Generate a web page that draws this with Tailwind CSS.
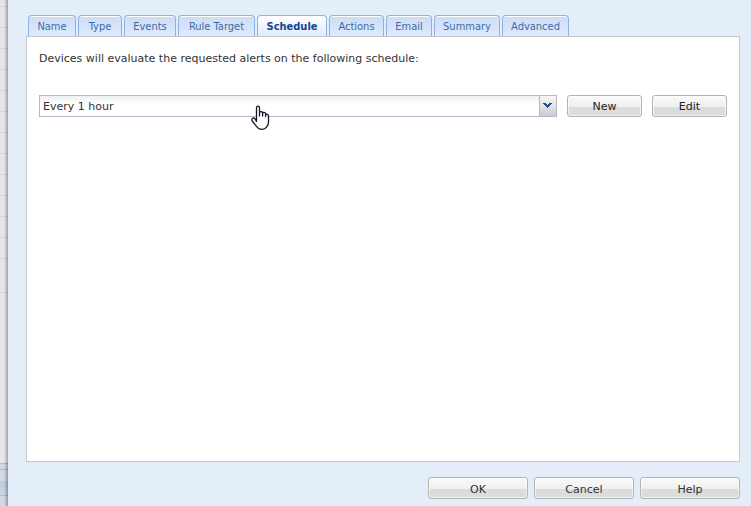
<!DOCTYPE html>
<html lang="en">
<head>
    <meta charset="UTF-8">
    <meta name="viewport" content="width=device-width, initial-scale=1.0">
    <title>Alert Rule - Schedule</title>
    <script src="https://cdn.jsdelivr.net/npm/@tailwindcss/browser@4"></script>
</head>
<body class="flex h-screen overflow-hidden bg-[#e4eef8] font-['DejaVu_Sans',sans-serif] text-[11px] leading-4 text-[#333]">
    <!-- Edge of the page behind the dialog -->
    <aside class="relative flex w-2 shrink-0 flex-col bg-[#e6e6e6]" aria-hidden="true">
        <div class="h-[7px] border-b border-[#d6d6d6]"></div>
        <div class="h-[21px] border-b border-[#d6d6d6]"></div>
        <div class="h-[21px] border-b border-[#d6d6d6]"></div>
        <div class="h-[21px] border-b border-[#d6d6d6]"></div>
        <div class="h-[21px] border-b border-[#d6d6d6]"></div>
        <div class="h-[21px] border-b border-[#d6d6d6]"></div>
        <div class="h-[21px] border-b border-[#d6d6d6]"></div>
        <div class="h-[21px] border-b border-[#d6d6d6]"></div>
        <div class="h-[21px] border-b border-[#d6d6d6]"></div>
        <div class="h-[21px] border-b border-[#d6d6d6]"></div>
        <div class="h-[21px] border-b border-[#d6d6d6]"></div>
        <div class="h-[21px] border-b border-[#d6d6d6]"></div>
        <div class="h-[21px] border-b border-[#d6d6d6]"></div>
        <div class="h-[34px] border-b border-[#d6d6d6]"></div>
        <div class="flex-1"></div>
        <div class="h-[7px] border-y border-[#b0bccd] bg-[#d3d9e1]"></div>
        <div class="h-[11px] bg-[#d3dae4]"></div>
        <div class="h-[15px] border-b border-[#b0bccd] bg-linear-to-b from-[#bccadc] to-[#cbd7e6]"></div>
        <div class="h-[10px] bg-[#d6dade]"></div>
        <div class="absolute inset-y-0 right-0 w-1 bg-linear-to-r from-black/0 to-black/30"></div>
    </aside>

    <main class="flex min-w-0 flex-1 flex-col pt-[15px] pr-[11px] pb-[7px] pl-[18px]">
        <nav class="flex h-[21px] shrink-0 gap-[2px] pl-[2px] font-['DejaVu_Sans_Condensed','DejaVu_Sans',sans-serif] text-[#416aa3]" role="tablist">
            <button role="tab" class="w-12 rounded-t border border-b-0 border-[#8db2e3] bg-linear-to-b from-[#cbdcf5] to-[#deebff] pt-[2px] inset-shadow-[0_1px_0_#fff]">Name</button>
            <button role="tab" class="w-11 rounded-t border border-b-0 border-[#8db2e3] bg-linear-to-b from-[#cbdcf5] to-[#deebff] pt-[2px] inset-shadow-[0_1px_0_#fff]">Type</button>
            <button role="tab" class="w-[52px] rounded-t border border-b-0 border-[#8db2e3] bg-linear-to-b from-[#cbdcf5] to-[#deebff] pt-[2px] inset-shadow-[0_1px_0_#fff]">Events</button>
            <button role="tab" class="w-[77px] rounded-t border border-b-0 border-[#8db2e3] bg-linear-to-b from-[#cbdcf5] to-[#deebff] pt-[2px] inset-shadow-[0_1px_0_#fff]">Rule Target</button>
            <button role="tab" aria-selected="true" class="w-[70px] rounded-t border border-b-0 border-[#8db2e3] bg-linear-to-b from-white to-[#deebff] pt-[2px] font-bold text-[#15428b]">Schedule</button>
            <button role="tab" class="w-[55px] rounded-t border border-b-0 border-[#8db2e3] bg-linear-to-b from-[#cbdcf5] to-[#deebff] pt-[2px] inset-shadow-[0_1px_0_#fff]">Actions</button>
            <button role="tab" class="w-[46px] rounded-t border border-b-0 border-[#8db2e3] bg-linear-to-b from-[#cbdcf5] to-[#deebff] pt-[2px] inset-shadow-[0_1px_0_#fff]">Email</button>
            <button role="tab" class="w-[66px] rounded-t border border-b-0 border-[#8db2e3] bg-linear-to-b from-[#cbdcf5] to-[#deebff] pt-[2px] inset-shadow-[0_1px_0_#fff]">Summary</button>
            <button role="tab" class="w-[67px] rounded-t border border-b-0 border-[#8db2e3] bg-linear-to-b from-[#cbdcf5] to-[#deebff] pt-[2px] inset-shadow-[0_1px_0_#fff]">Advanced</button>
        </nav>

        <section class="flex-1 border border-[#c8c8c8] bg-white px-3 pt-[14px]" role="tabpanel">
            <label for="schedule">Devices will evaluate the requested alerts on the following schedule:</label>
            <div class="mt-7 flex gap-[10px]">
                <div class="relative h-[22px] flex-1">
                    <select id="schedule" class="block h-[22px] w-full cursor-pointer appearance-none border border-[#b5b8c8] bg-white bg-linear-to-b from-[#edf1f2] to-white to-40% pt-[2px] pl-[3px] text-[#333]">
                        <option>Every 1 hour</option>
                    </select>
                    <span class="pointer-events-none absolute top-0 right-0 flex h-[22px] w-[18px] justify-center border border-[#b5b8c8] bg-linear-to-b from-[#f8f8f8] to-[#c9cccf] pt-[7px] pr-[1px]">
                        <svg class="h-[5px] w-[9px]" viewBox="0 0 9 5" fill="#24478f" shape-rendering="crispEdges">
                            <path d="M0 0h3v1h1v1h1v-1h1v-1h3v1h-1v1h-1v1h-1v1h-1v1h-1v-1h-1v-1h-1v-1h-1v-1h-1z"/>
                        </svg>
                    </span>
                    <!-- Hand pointer -->
                    <svg class="pointer-events-none absolute top-[10px] left-[212px] h-[26px] w-[19px]" viewBox="0 0 19 26" fill="white" stroke="#15152a" stroke-width="1.3" stroke-linejoin="round" stroke-linecap="round">
                        <path d="M5.5 16.5V3Q5.5 1.2 7 1.2T8.500 3V11V8Q8.700 6.500 10.200 6.600T11.600 8V11V8.500Q11.800 7.200 13.200 7.400T14.600 9V11.500V10Q15 8.900 16.300 9.300T17.500 11V17Q17.500 20 15.800 21.800Q14 24.300 11 24.300Q8 24.300 6.300 22.300L1.200 16Q.3 14.300 1.600 13.300Q3 12.500 4.200 14Z"/>
                    </svg>
                </div>
                <button class="h-[22px] w-[75px] rounded-[3px] border border-[#b4b4b4] bg-linear-to-b from-[#fafafa] from-0% via-[#efefef] via-55% to-[#dcdcdc] to-55% pt-[2px] text-[#222] inset-shadow-[0_0_0_1px_#ffffff99]">New</button>
                <button class="h-[22px] w-[75px] rounded-[3px] border border-[#b4b4b4] bg-linear-to-b from-[#fafafa] from-0% via-[#efefef] via-55% to-[#dcdcdc] to-55% pt-[2px] text-[#222] inset-shadow-[0_0_0_1px_#ffffff99]">Edit</button>
            </div>
        </section>

        <footer class="mt-[15px] flex shrink-0 justify-end gap-[6px]">
            <button class="h-[22px] w-[100px] rounded-[3px] border border-[#b4b4b4] bg-linear-to-b from-[#fafafa] from-0% via-[#efefef] via-55% to-[#dcdcdc] to-55% pt-[3px] text-[#333] inset-shadow-[0_0_0_1px_#ffffff99]">OK</button>
            <button class="h-[22px] w-[100px] rounded-[3px] border border-[#b4b4b4] bg-linear-to-b from-[#fafafa] from-0% via-[#efefef] via-55% to-[#dcdcdc] to-55% pt-[3px] text-[#333] inset-shadow-[0_0_0_1px_#ffffff99]">Cancel</button>
            <button class="h-[22px] w-[100px] rounded-[3px] border border-[#b4b4b4] bg-linear-to-b from-[#fafafa] from-0% via-[#efefef] via-55% to-[#dcdcdc] to-55% pt-[3px] text-[#333] inset-shadow-[0_0_0_1px_#ffffff99]">Help</button>
        </footer>
    </main>
</body>
</html>
